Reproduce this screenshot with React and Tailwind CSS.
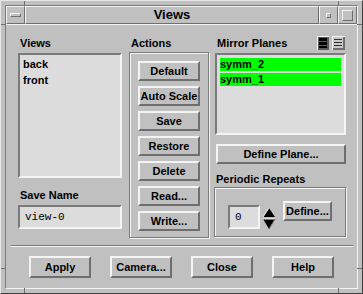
import React from 'react';

const raised = 'border-t-[#f4f4f4] border-l-[#f4f4f4] border-b-[#6e6e6e] border-r-[#6e6e6e]';
const sunken = 'border-t-[#7b7b7b] border-l-[#7b7b7b] border-b-[#f4f4f4] border-r-[#f4f4f4]';

const Btn = ({ children, className = '' }) => (
  <div className={`border-2 ${raised} bg-[#c0c0c0] flex items-center justify-center text-[11px] font-bold leading-none ${className}`}>
    {children}
  </div>
);

const Label = ({ children, className = '' }) => (
  <div className={`text-[11px] font-bold leading-[14px] ${className}`}>{children}</div>
);

const Notch = ({ className }) => <div className={`absolute bg-[#6e6e6e] ${className}`} />;

const SelectAllIcon = () => (
  <svg width="12" height="14" viewBox="0 0 12 14">
    <rect width="12" height="14" fill="#5a5a5a" />
    <path d="M0 0H12V1H1V14H0Z" fill="#f4f4f4" />
    <rect x="2" y="2" width="8" height="3" fill="#000" />
    <rect x="2" y="6" width="8" height="3" fill="#000" />
    <rect x="2" y="10" width="8" height="2" fill="#000" />
  </svg>
);

const DeselectIcon = () => (
  <svg width="13" height="14" viewBox="0 0 13 14">
    <rect width="13" height="14" fill="#6e6e6e" />
    <path d="M0 0H13V1H1V14H0Z" fill="#f4f4f4" />
    <rect x="1" y="1" width="10" height="11" fill="#c8c8c8" />
    <rect x="2" y="3" width="8" height="1" fill="#303030" />
    <rect x="2" y="6" width="8" height="1" fill="#303030" />
    <rect x="2" y="9" width="8" height="1" fill="#303030" />
  </svg>
);

const Spinner = () => (
  <svg width="14" height="23" viewBox="0 0 14 23">
    <polygon points="7,1 13,10 1,10" fill="#000" />
    <polyline points="1,10 7,1" stroke="#f4f4f4" strokeWidth="1" fill="none" />
    <polygon points="1,12 13,12 7,22" fill="#000" />
    <polyline points="1,12 13,12" stroke="#f4f4f4" strokeWidth="1" fill="none" />
    <polyline points="7,22 13,12" stroke="#6e6e6e" strokeWidth="1" fill="none" />
  </svg>
);

export default function App() {
  return (
    <div className="relative w-[363px] h-[294px] bg-[#c0c0c0] text-black font-['Liberation_Sans',Arial,sans-serif] border border-t-[#e8e8e8] border-l-[#e8e8e8] border-b-[#404040] border-r-[#404040] p-[4px]">
      {/* frame resize notches */}
      <Notch className="left-[23px] top-0 w-[1px] h-[5px]" />
      <Notch className="left-[337px] top-0 w-[1px] h-[5px]" />
      <Notch className="left-0 top-[23px] w-[5px] h-[1px]" />
      <Notch className="right-0 top-[23px] w-[5px] h-[1px]" />
      <Notch className="left-0 top-[267px] w-[5px] h-[1px]" />
      <Notch className="right-0 top-[267px] w-[5px] h-[1px]" />
      <Notch className="left-[23px] bottom-0 w-[1px] h-[5px]" />
      <Notch className="left-[337px] bottom-0 w-[1px] h-[5px]" />

      <div className={`h-full flex flex-col border ${sunken}`}>
        {/* title bar */}
        <div className="h-[19px] flex border-b border-b-[#f4f4f4]">
          <div className={`w-[19px] border ${raised} flex items-center justify-center`}>
            <div className={`w-[11px] h-[4px] border ${raised}`} />
          </div>
          <div className={`flex-1 border ${raised} flex items-center justify-center text-[13px] font-bold`}>
            Views
          </div>
          <div className={`w-[19px] border ${raised} flex items-center justify-center`}>
            <div className={`w-[5px] h-[5px] border ${raised}`} />
          </div>
          <div className={`w-[19px] border ${raised} flex items-center justify-center`}>
            <div className={`w-[11px] h-[11px] border ${raised}`} />
          </div>
        </div>

        {/* client area */}
        <div className="flex-1 flex flex-col pt-[11px]">
          <div className="flex pl-[12px]">
            {/* Views column */}
            <div className="w-[104px] flex flex-col">
              <Label className="h-[17px] pl-[2px]">Views</Label>
              <div className={`h-[125px] border-2 ${sunken} bg-[#dcdcdc] pl-[3px] pt-[1px] text-[11px] font-bold leading-[16px]`}>
                <div>back</div>
                <div>front</div>
              </div>
              <Label className="pt-[10px] mb-[3px] pl-[2px]">Save Name</Label>
              <div className={`h-[24px] border-2 ${sunken} bg-[#dcdcdc] flex items-center pl-[5px] font-['Liberation_Mono',monospace] text-[11px]`}>
                view-0
              </div>
            </div>

            {/* Actions column */}
            <div className="w-[80px] ml-[7px] flex flex-col">
              <Label className="h-[16px] pl-[2px]">Actions</Label>
              <div className="h-[186px] border border-[#7b7b7b] shadow-[inset_1px_1px_0_#f4f4f4,1px_1px_0_#f4f4f4] pt-[8px] pl-[8px] flex flex-col gap-[5px]">
                {['Default', 'Auto Scale', 'Save', 'Restore', 'Delete', 'Read...', 'Write...'].map((t) => (
                  <Btn key={t} className="w-[62px] h-[20px]">{t}</Btn>
                ))}
              </div>
            </div>

            {/* Mirror planes column */}
            <div className="w-[131px] ml-[6px] flex flex-col">
              <div className="h-[17px] flex items-start">
                <Label className="flex-1 pl-[2px]">Mirror Planes</Label>
                <div className="flex gap-[3px] mr-[1px]">
                  <SelectAllIcon />
                  <DeselectIcon />
                </div>
              </div>
              <div className={`h-[82px] border-2 ${sunken} bg-[#dcdcdc] px-[3px] pt-[3px] flex flex-col gap-[2px] text-[11px] font-bold leading-[13px]`}>
                <div className="h-[13px] bg-[#00ff00]">symm_2</div>
                <div className="h-[13px] bg-[#00ff00]">symm_1</div>
              </div>
              <Btn className="mt-[9px] h-[20px] ml-[1px]">Define Plane...</Btn>
              <Label className="pt-[8px] mb-[1px] pl-[1px]">Periodic Repeats</Label>
              <div className="h-[50px] -ml-[1px] border border-[#7b7b7b] shadow-[inset_1px_1px_0_#f4f4f4,1px_1px_0_#f4f4f4] flex items-start pl-[13px]">
                <div className={`mt-[17px] w-[32px] h-[24px] border-2 ${sunken} bg-[#dcdcdc] flex items-center pl-[5px] font-['Liberation_Mono',monospace] text-[11px]`}>
                  0
                </div>
                <div className="mt-[19px] ml-[2px]">
                  <Spinner />
                </div>
                <Btn className="mt-[13px] ml-[7px] w-[49px] h-[20px]">Define...</Btn>
              </div>
            </div>
          </div>

          {/* separator */}
          <div className="mt-[7px] ml-[5px] mr-[4px] h-[2px] border-t border-t-[#7b7b7b] border-b border-b-[#f4f4f4]" />

          {/* bottom buttons */}
          <div className="mt-[9px] flex pl-[23px] gap-[19px]">
            {['Apply', 'Camera...', 'Close', 'Help'].map((t) => (
              <Btn key={t} className="w-[62px] h-[22px]">{t}</Btn>
            ))}
          </div>
        </div>
      </div>
    </div>
  );
}
